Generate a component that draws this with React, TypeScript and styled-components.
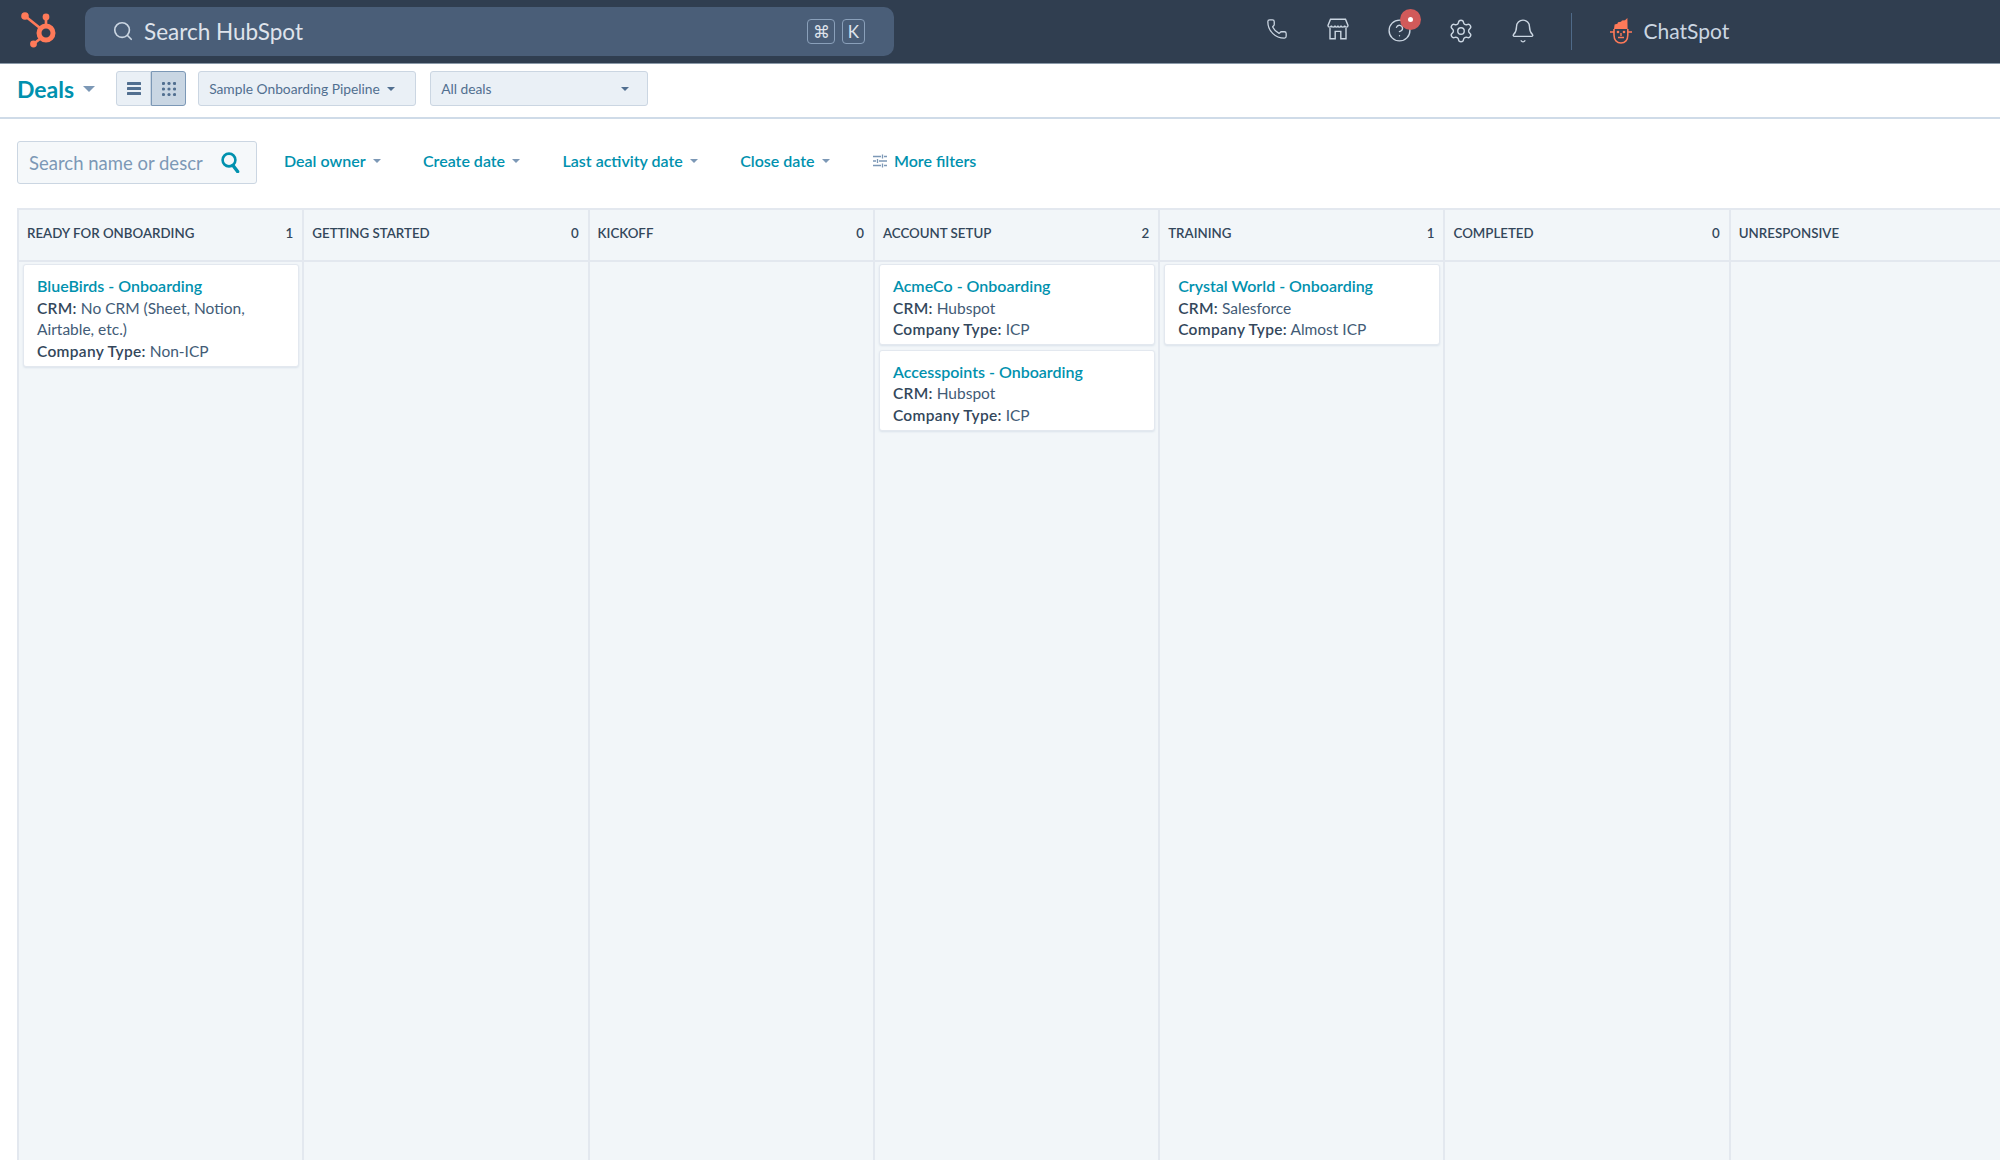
import React from "react";
import styled, { createGlobalStyle } from "styled-components";
import { Bell, CircleHelp, Phone, Search, Settings } from "lucide-react";

const GlobalStyle = createGlobalStyle`
  html, body {
    margin: 0;
    padding: 0;
    width: 2000px;
    height: 1160px;
    overflow: hidden;
    background: #fff;
    font-family: Lato, "Open Sans", sans-serif;
  }
  * { box-sizing: border-box; }
`;

const HubLogo = () => (
  <svg width="40" height="42" viewBox="0 0 40 42" fill="none">
    <circle cx="26" cy="23" r="7" stroke="#ff7a59" strokeWidth="5" />
    <circle cx="5" cy="6" r="3.8" fill="#ff7a59" />
    <circle cx="26" cy="7" r="3.4" fill="#ff7a59" />
    <circle cx="13.5" cy="34" r="3.4" fill="#ff7a59" />
    <path d="M5 6 L20 18 M26 7 V15 M13.5 34 L21 28" stroke="#ff7a59" strokeWidth="2.6" />
  </svg>
);

const StoreIcon = () => (
  <svg width="22" height="22" viewBox="0 0 22 22" fill="none" stroke="#cbd6e2" strokeWidth="1.4">
    <path d="M3.5 1.2 H18.5 L21 7.4 C21 9.6 17.7 9.6 17.6 7.6 C17.5 9.6 14 9.6 14 7.6 C14 9.6 10.9 9.6 11 7.6 C11 9.6 8 9.6 8 7.6 C8 9.6 4.5 9.6 4.4 7.6 C4.3 9.6 1 9.6 1 7.4 Z" />
    <path d="M3 10 V20.8 H8.2 V13.4 H13.8 V20.8 H19 V10" />
  </svg>
);

const ChatSpotFace = () => (
  <svg width="24" height="26" viewBox="0 0 24 26" fill="none">
    <path d="M5 11 L5.6 6.4 L8.4 5.8 L9 4.2 L12 3.8 L13 2.4 L16 2.2 L18.4 0 L18.6 11 Z" fill="#ff7a59" />
    <path d="M5 11 V17 C5 22 8 25 12 25 C16 25 18.8 22 18.8 17 V11" stroke="#ff7a59" strokeWidth="1.6" />
    <path d="M5 14 H1 M18.8 14 H23" stroke="#ff7a59" strokeWidth="1.6" />
    <circle cx="9" cy="14" r="1.3" fill="#ff7a59" />
    <circle cx="15" cy="14" r="1.3" fill="#ff7a59" />
    <path d="M9 19.5 H15 M12 15 V18" stroke="#ff7a59" strokeWidth="1.4" />
  </svg>
);

const ListIcon = () => (
  <svg width="14" height="13" viewBox="0 0 14 13" fill="#516f90">
    <rect y="0" width="14" height="3" rx="0.6" />
    <rect y="5" width="14" height="3" rx="0.6" />
    <rect y="10" width="14" height="3" rx="0.6" />
  </svg>
);

const GridIcon = () => (
  <svg width="14" height="14" viewBox="0 0 14 14" fill="#516f90">
    {[1.5, 7, 12.5].map((cy) =>
      [1.5, 7, 12.5].map((cx) => <circle key={`${cx}-${cy}`} cx={cx} cy={cy} r="1.6" />)
    )}
  </svg>
);

const SlidersIcon = () => (
  <svg width="14" height="14" viewBox="0 0 14 14" stroke="#7c98b6" strokeWidth="1.3" fill="none">
    <path d="M0 2.5 H8 M11 2.5 H14 M0 7 H3 M6 7 H14 M0 11.5 H8 M11 11.5 H14" />
    <path d="M9.5 0.5 V4.5 M4.5 5 V9 M9.5 9.5 V13.5" />
  </svg>
);

const NameSearchIcon = () => (
  <svg width="19" height="21" viewBox="0 0 19 21" fill="none" stroke="#0091ae">
    <circle cx="8" cy="8" r="6.4" strokeWidth="2.6" />
    <path d="M12 13.5 L16.6 19.6" strokeWidth="3.4" strokeLinecap="round" />
  </svg>
);

const columns = [
  {
    title: "READY FOR ONBOARDING",
    count: "1",
    deals: [{ name: "BlueBirds - Onboarding", crm: "No CRM (Sheet, Notion, Airtable, etc.)", type: "Non-ICP" }],
  },
  { title: "GETTING STARTED", count: "0", deals: [] },
  { title: "KICKOFF", count: "0", deals: [] },
  {
    title: "ACCOUNT SETUP",
    count: "2",
    deals: [
      { name: "AcmeCo - Onboarding", crm: "Hubspot", type: "ICP" },
      { name: "Accesspoints - Onboarding", crm: "Hubspot", type: "ICP" },
    ],
  },
  {
    title: "TRAINING",
    count: "1",
    deals: [{ name: "Crystal World - Onboarding", crm: "Salesforce", type: "Almost ICP" }],
  },
  { title: "COMPLETED", count: "0", deals: [] },
  { title: "UNRESPONSIVE", count: "", deals: [] },
];

const filters = ["Deal owner", "Create date", "Last activity date", "Close date"];

export default function App() {
  return (
    <Page>
      <GlobalStyle />
      <TopBar>
        <LogoSlot>
          <HubLogo />
        </LogoSlot>
        <GlobalSearch>
          <Search size={22} color="#cbd6e2" strokeWidth={1.8} />
          <GlobalSearchText>Search HubSpot</GlobalSearchText>
          <KeyCap $wide>⌘</KeyCap>
          <KeyCap>K</KeyCap>
        </GlobalSearch>
        <TopIcons>
          <TopIcon>
            <Phone size={22} color="#cbd6e2" strokeWidth={1.4} />
          </TopIcon>
          <TopIcon>
            <StoreIcon />
          </TopIcon>
          <TopIcon>
            <CircleHelp size={25} color="#cbd6e2" strokeWidth={1.3} />
            <Badge />
          </TopIcon>
          <TopIcon>
            <Settings size={26} color="#cbd6e2" strokeWidth={1.3} />
          </TopIcon>
          <TopIcon>
            <Bell size={26} color="#cbd6e2" strokeWidth={1.3} />
          </TopIcon>
        </TopIcons>
        <TopDivider />
        <ChatSpot>
          <ChatSpotFace />
          <ChatSpotLabel>ChatSpot</ChatSpotLabel>
        </ChatSpot>
      </TopBar>

      <SubBar>
        <DealsTitle>Deals</DealsTitle>
        <Caret $size={6} $color="#7c98b6" />
        <ViewToggle>
          <ToggleButton>
            <ListIcon />
          </ToggleButton>
          <ToggleButton $active>
            <GridIcon />
          </ToggleButton>
        </ViewToggle>
        <Select $width={218}>
          Sample Onboarding Pipeline
          <Caret $size={4} $color="#516f90" />
        </Select>
        <Select $width={218} $spread>
          All deals
          <Caret $size={4} $color="#516f90" />
        </Select>
      </SubBar>

      <FilterBar>
        <NameSearch>
          <NamePlaceholder>Search name or descr</NamePlaceholder>
          <NameSearchIcon />
        </NameSearch>
        <Filters>
          {filters.map((label) => (
            <FilterLink key={label}>
              {label}
              <Caret $size={4} $color="#7c98b6" />
            </FilterLink>
          ))}
          <MoreFilters>
            <SlidersIcon />
            More filters
          </MoreFilters>
        </Filters>
      </FilterBar>

      <Board>
        {columns.map((col) => (
          <Column key={col.title}>
            <ColumnHead>
              <span>{col.title}</span>
              <span>{col.count}</span>
            </ColumnHead>
            <ColumnBody>
              {col.deals.map((deal) => (
                <Card key={deal.name}>
                  <CardName>{deal.name}</CardName>
                  <CardLine>
                    <b>CRM:</b> {deal.crm}
                  </CardLine>
                  <CardLine>
                    <b>Company Type:</b> {deal.type}
                  </CardLine>
                </Card>
              ))}
            </ColumnBody>
          </Column>
        ))}
      </Board>
    </Page>
  );
}

const Page = styled.div`
  width: 2000px;
  height: 1160px;
  display: flex;
  flex-direction: column;
  overflow: hidden;
`;

const TopBar = styled.div`
  height: 64px;
  flex: none;
  display: flex;
  align-items: center;
  padding-bottom: 1px;
  background: #303e50;
  border-bottom: 1px solid #8a99a8;
`;

const LogoSlot = styled.div`
  width: 85px;
  padding: 0 0 0 20px;
  display: flex;
`;

const GlobalSearch = styled.div`
  width: 809px;
  height: 49px;
  display: flex;
  align-items: center;
  padding: 0 29px 0 27px;
  background: #4a5e78;
  border-radius: 10px;
`;

const GlobalSearchText = styled.span`
  flex: 1;
  margin-left: 10px;
  font-size: 22.5px;
  color: #dfe3eb;
`;

const KeyCap = styled.span<{ $wide?: boolean }>`
  width: ${(p) => (p.$wide ? 28 : 23)}px;
  height: 25px;
  margin-left: ${(p) => (p.$wide ? 0 : 7)}px;
  display: flex;
  align-items: center;
  justify-content: center;
  border: 1px solid #8aa0ba;
  border-radius: 4px;
  font-size: 17px;
  color: #dfe3eb;
`;

const TopIcons = styled.div`
  margin-left: 352px;
  display: flex;
`;

const TopIcon = styled.div`
  position: relative;
  width: 61.5px;
  display: flex;
  justify-content: center;
`;

const Badge = styled.span`
  position: absolute;
  top: -9px;
  left: 31px;
  width: 21px;
  height: 21px;
  border-radius: 50%;
  background: #d15a5a;

  &::after {
    content: "";
    position: absolute;
    left: 8px;
    top: 8px;
    width: 5px;
    height: 5px;
    border-radius: 50%;
    background: #fff;
  }
`;

const TopDivider = styled.div`
  width: 1px;
  height: 37px;
  margin-left: 17px;
  background: #4f6a88;
`;

const ChatSpot = styled.div`
  margin-left: 37px;
  display: flex;
  align-items: center;
  gap: 11px;
`;

const ChatSpotLabel = styled.span`
  margin-bottom: 2px;
  font-size: 21px;
  color: #cbd6e2;
`;

const SubBar = styled.div`
  height: 55px;
  flex: none;
  display: flex;
  align-items: center;
  padding: 0 0 4px 17px;
  border-bottom: 2px solid #cfdbe8;
`;

const DealsTitle = styled.span`
  font-size: 23px;
  font-weight: 700;
  color: #0091ae;
  margin-right: 2px;
`;

const Caret = styled.span<{ $size: number; $color: string }>`
  display: inline-block;
  width: 0;
  height: 0;
  margin-left: 7px;
  border-left: ${(p) => p.$size}px solid transparent;
  border-right: ${(p) => p.$size}px solid transparent;
  border-top: ${(p) => p.$size}px solid ${(p) => p.$color};
`;

const ViewToggle = styled.div`
  margin-left: 21px;
  display: flex;
  height: 35px;
`;

const ToggleButton = styled.div<{ $active?: boolean }>`
  width: 35px;
  display: flex;
  align-items: center;
  justify-content: center;
  background: ${(p) => (p.$active ? "#c9d6e3" : "#eaf0f6")};
  border: 1px solid ${(p) => (p.$active ? "#7c98b6" : "#cbd6e2")};
  border-radius: ${(p) => (p.$active ? "0 3px 3px 0" : "3px 0 0 3px")};
`;

const Select = styled.div<{ $width: number; $spread?: boolean }>`
  width: ${(p) => p.$width}px;
  height: 35px;
  margin-left: ${(p) => (p.$spread ? 14 : 12)}px;
  padding: 0 18px 0 10px;
  display: flex;
  align-items: center;
  justify-content: ${(p) => (p.$spread ? "space-between" : "flex-start")};
  background: #eaf0f6;
  border: 1px solid #cbd6e2;
  border-radius: 3px;
  font-size: 13.8px;
  color: #516f90;
`;

const FilterBar = styled.div`
  height: 89px;
  flex: none;
  display: flex;
  align-items: center;
  padding: 0 0 2px 17px;
`;

const NameSearch = styled.div`
  width: 240px;
  height: 43px;
  display: flex;
  align-items: center;
  padding: 0 16px 0 11px;
  background: #f5f8fa;
  border: 1px solid #cbd6e2;
  border-radius: 3px;
`;

const NamePlaceholder = styled.span`
  flex: 1;
  margin-right: 14px;
  font-size: 18.5px;
  color: #7c98b6;
  white-space: nowrap;
  overflow: hidden;
`;

const Filters = styled.div`
  display: flex;
  align-items: center;
  margin: 0 0 4px 27px;
  gap: 42.4px;
`;

const FilterLink = styled.span`
  display: flex;
  align-items: center;
  font-size: 16px;
  font-weight: 600;
  color: #0091ae;
`;

const MoreFilters = styled(FilterLink)`
  gap: 7px;
  margin-left: 1px;
`;

const Board = styled.div`
  flex: 1;
  min-height: 0;
  margin-left: 17px;
  display: flex;
  border-top: 2px solid #e3e8ef;
  background: #f2f6f9;
`;

const Column = styled.div`
  flex: none;
  width: 285.3px;
  display: flex;
  flex-direction: column;
  border-left: 2px solid #e3e8ef;
`;

const ColumnHead = styled.div`
  height: 52px;
  flex: none;
  display: flex;
  align-items: center;
  justify-content: space-between;
  padding: 0 9px 5px 8px;
  border-bottom: 2px solid #e3e8ef;
  font-size: 13.3px;
  font-weight: 600;
  color: #33475b;
`;

const ColumnBody = styled.div`
  flex: 1;
  display: flex;
  flex-direction: column;
  gap: 4.5px;
  padding: 2px 3px 0 4px;
`;

const Card = styled.div`
  padding: 10px 13px 3px;
  background: #fff;
  border: 1px solid #e3e8ef;
  border-radius: 3px;
  box-shadow: 0 1px 2px rgba(124, 152, 182, 0.2);
  font-size: 15.5px;
  line-height: 21.7px;
`;

const CardName = styled.div`
  margin-bottom: 1px;
  font-size: 16px;
  font-weight: 600;
  color: #0091ae;
`;

const CardLine = styled.div`
  color: #425b76;

  b {
    font-weight: 600;
    letter-spacing: 0.3px;
    color: #33475b;
  }
`;
